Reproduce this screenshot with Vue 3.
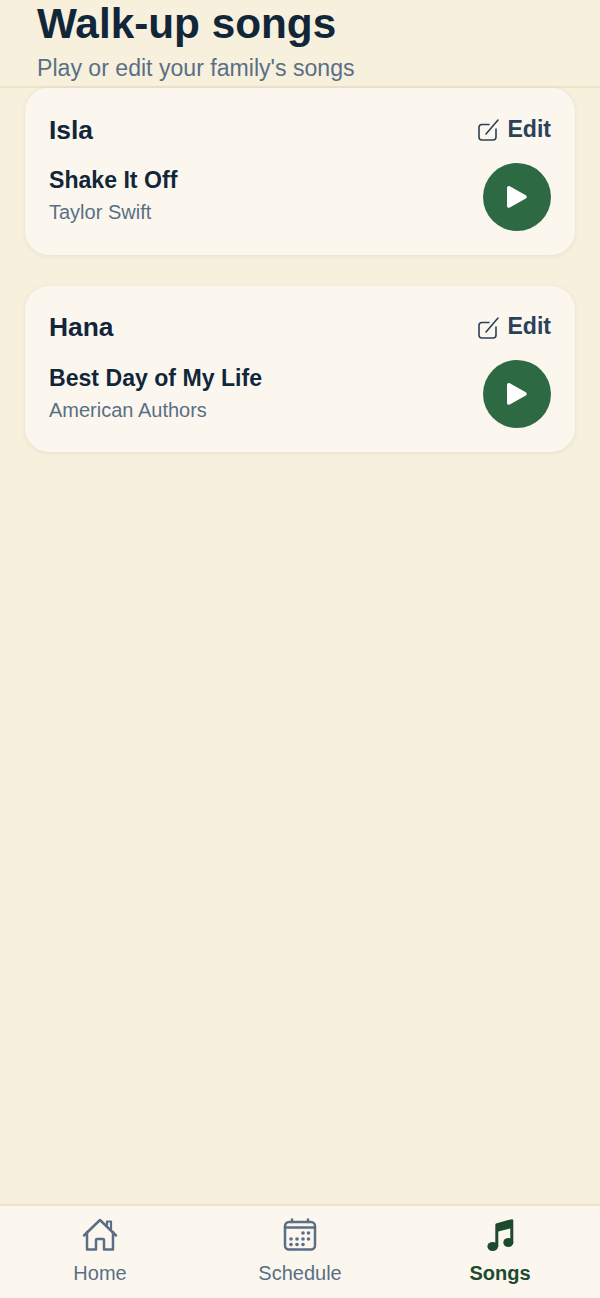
<template>
  <div class="screen">
    <header class="header">
      <h1>Walk-up songs</h1>
      <p>Play or edit your family's songs</p>
    </header>

    <main class="list">
      <section v-for="kid in kids" :key="kid.name" class="card">
        <div class="card-top">
          <h2>{{ kid.name }}</h2>
          <button class="edit">
            <svg width="24" height="24" viewBox="0 0 24 24" fill="none" stroke="currentColor" stroke-width="1.6" stroke-linecap="round" stroke-linejoin="round">
              <path d="M12 7.5H5a3 3 0 0 0-3 3V20a3 3 0 0 0 3 3h11a3 3 0 0 0 3-3v-8" />
              <path d="M9 17 21 3" />
            </svg>
            <span>Edit</span>
          </button>
        </div>
        <div class="card-bottom">
          <div class="track">
            <div class="song">{{ kid.song }}</div>
            <div class="artist">{{ kid.artist }}</div>
          </div>
          <button class="play">
            <svg width="24" height="28" viewBox="0 0 24 28">
              <path d="M2 5v18c0 1.600 1.500 2.300 2.800 1.500l16-9c1.200-.8 1.200-2.400 0-3.200l-16-9C3.500 2.700 2 3.400 2 5z" fill="#fff" />
            </svg>
          </button>
        </div>
      </section>
    </main>

    <nav class="tabs">
      <a class="tab">
        <svg width="36" height="36" viewBox="0 0 36 36" fill="none" stroke="currentColor" stroke-width="2.5" stroke-linejoin="round" stroke-linecap="round">
          <path d="M2 17.500 18 2l16 15.500" />
          <path d="M5 14v17.500h9V22a1 1 0 0 1 1-1h6a1 1 0 0 1 1 1v9.500h9V14" />
          <path d="M25 7V3.500h4V11.500" stroke-width="2.200" />
        </svg>
        <span>Home</span>
      </a>
      <a class="tab">
        <svg width="36" height="36" viewBox="0 0 36 36" fill="none" stroke="currentColor" stroke-width="2.5" stroke-linecap="round">
          <rect x="3" y="4" width="30" height="27.500" rx="4" />
          <path d="M3 9.500h30M10 1.500v2.500M26 1.500v2.500" />
          <g fill="currentColor" stroke="none">
            <circle v-for="d in dots" :key="d[0] + '-' + d[1]" :cx="d[0]" :cy="d[1]" r="1.800" />
          </g>
        </svg>
        <span>Schedule</span>
      </a>
      <a class="tab active">
        <svg width="36" height="36" viewBox="0 0 36 36" fill="currentColor">
          <path d="M13.300 7c0-1 .6-1.600 1.500-1.800L29.500 1.200c1-.2 1.800.4 1.800 1.400V25h-3V10.500l-12 3V29h-3z" />
          <ellipse cx="10.700" cy="28.500" rx="5.300" ry="4.500" />
          <ellipse cx="26.300" cy="24.500" rx="5" ry="4.500" />
        </svg>
        <span>Songs</span>
      </a>
    </nav>
  </div>
</template>

<script setup>
const kids = [
  { name: "Isla", song: "Shake It Off", artist: "Taylor Swift" },
  { name: "Hana", song: "Best Day of My Life", artist: "American Authors" },
];

const dots = [
  [21, 15], [26.5, 15],
  [9, 21], [15, 21], [21, 21], [26.5, 21],
  [9, 26.5], [15, 26.5], [21, 26.5],
];
</script>

<style scoped>
.screen {
  display: flex;
  flex-direction: column;
  width: 600px;
  height: 1298px;
  overflow: hidden;
  background: #f6f0dd;
  font-family: "Liberation Sans", Arial, sans-serif;
}

.header {
  height: 88px;
  box-sizing: border-box;
  padding: 0 37px;
  border-bottom: 2px solid #ece3cb;
  flex-shrink: 0;
}

h1 {
  margin: 0;
  font-size: 42.3px;
  line-height: 48px;
  font-weight: 700;
  color: #12263a;
}

.header p {
  margin: 6px 0 0;
  font-size: 23.1px;
  line-height: 28px;
  color: #5a6f85;
}

.list {
  flex: 1;
  display: flex;
  flex-direction: column;
  gap: 31px;
  padding: 0 25px;
}

.card {
  height: 166.5px;
  box-sizing: border-box;
  padding: 24px;
  background: #fbf7ef;
  border-radius: 24px;
  box-shadow: 0 1px 4px rgba(120, 100, 60, 0.12);
}

.card-top {
  display: flex;
  justify-content: space-between;
  align-items: center;
  height: 36px;
}

h2 {
  margin: 0;
  font-size: 26.4px;
  font-weight: 700;
  color: #12263a;
}

.edit {
  display: flex;
  align-items: center;
  gap: 6px;
  padding: 0 0 2px;
  border: 0;
  background: none;
  font: 700 23.1px "Liberation Sans", Arial, sans-serif;
  color: #2a4159;
}

.card-bottom {
  display: flex;
  justify-content: space-between;
  align-items: center;
  margin-top: 14.5px;
}

.track {
  padding-bottom: 2px;
}

.song {
  font-size: 23.1px;
  line-height: 30px;
  font-weight: 700;
  color: #12263a;
}

.artist {
  margin-top: 3px;
  font-size: 20px;
  line-height: 28px;
  color: #5a6f85;
}

.play {
  display: flex;
  align-items: center;
  justify-content: center;
  width: 68px;
  height: 68px;
  padding: 0;
  border: 0;
  border-radius: 50%;
  background: #2d6a43;
}

.tabs {
  display: grid;
  grid-template-columns: repeat(3, 1fr);
  height: 94px;
  box-sizing: border-box;
  flex-shrink: 0;
  background: #fbf7ef;
  border-top: 2px solid #ece3cb;
}

.tab {
  display: flex;
  flex-direction: column;
  align-items: center;
  padding-top: 12px;
  gap: 7px;
  font-size: 20px;
  line-height: 24px;
  color: #5a6f85;
}

.tab.active {
  color: #1c4a2e;
  font-weight: 700;
}
</style>
